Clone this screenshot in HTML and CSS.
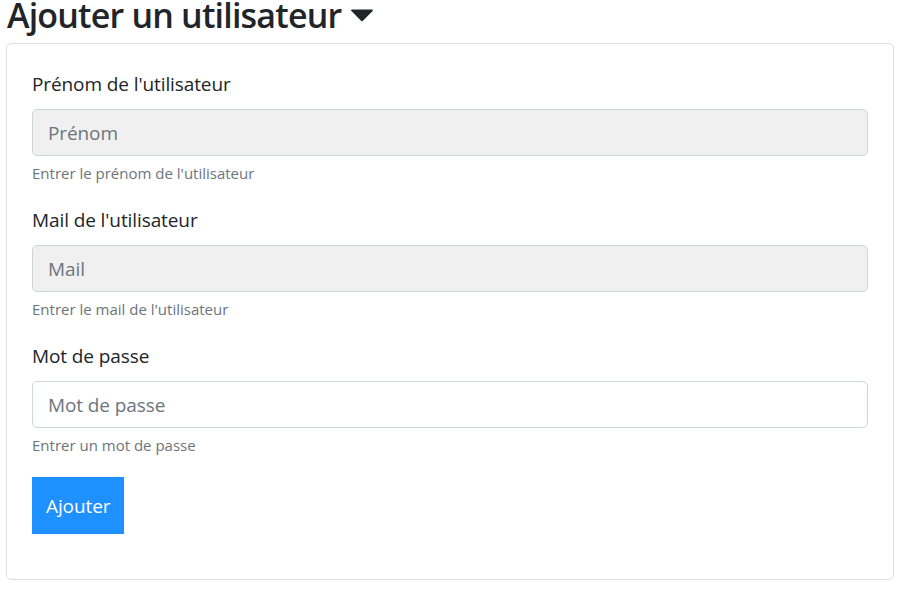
FILE: index.html
```html
<!DOCTYPE html>
<html lang="fr">
<head>
<meta charset="utf-8">
<title>Ajouter un utilisateur</title>
<link rel="stylesheet" href="styles.css">
</head>
<body>
<div class="page">
  <h3 class="title">Ajouter un utilisateur <svg class="caret" viewBox="0 0 24 13" width="24" height="13"><path d="M2 0.5 H22 Q23.8 0.5 22.6 2 L13.2 11.6 Q12 12.8 10.8 11.6 L1.4 2 Q0.2 0.5 2 0.5 Z" fill="#212529"/></svg></h3>
  <div class="card">
    <form class="card-body">
      <div class="form-group">
        <label class="label">Prénom de l'utilisateur</label>
        <input class="control" type="text" placeholder="Prénom" disabled>
        <small class="help">Entrer le prénom de l'utilisateur</small>
      </div>
      <div class="form-group">
        <label class="label">Mail de l'utilisateur</label>
        <input class="control" type="text" placeholder="Mail" disabled>
        <small class="help">Entrer le mail de l'utilisateur</small>
      </div>
      <div class="form-group">
        <label class="label">Mot de passe</label>
        <input class="control" type="password" placeholder="Mot de passe">
        <small class="help">Entrer un mot de passe</small>
      </div>
      <div class="form-group">
        <button class="btn" type="button">Ajouter</button>
      </div>
    </form>
  </div>
</div>
</body>
</html>
```
FILE: styles.css
```css
html, body {
  margin: 0;
  padding: 0;
  background: #fff;
}
body {
  font-family: "Open Sans", "Noto Sans", sans-serif;
  color: #212529;
  font-size: 20px;
  line-height: 1.5;
}
.page {
  padding: 0 11px 0 6px;
}
.title {
  margin: 0 0 15px 1px;
  padding-top: 2px;
  font-size: 34px;
  font-weight: 600;
  line-height: 26px;
  letter-spacing: -0.8px;
  display: flex;
  align-items: center;
  gap: 9px;
}
.caret {
  display: block;
  margin-top: 1px;
}
.card {
  border: 1px solid #dfdfdf;
  border-radius: 5px;
}
.card-body {
  padding: 25px 25px 5px 25px;
  margin: 0 0 20px;
}
.form-group {
  margin-bottom: 20px;
}
.label {
  display: block;
  margin-bottom: 10px;
  font-size: 19px;
  line-height: 30px;
  letter-spacing: -0.1px;
}
.control {
  display: block;
  box-sizing: border-box;
  width: 100%;
  height: 47px;
  padding: 7px 15px;
  font-family: inherit;
  font-size: 19px;
  color: #495057;
  background: #fff;
  border: 1px solid #ced4da;
  border-radius: 5px;
  letter-spacing: -0.1px;
}
.control::placeholder {
  color: #6c757d;
  opacity: 1;
}
.control:disabled {
  background: #f0f0f0;
}
.help {
  display: block;
  margin-top: 5px;
  font-size: 15px;
  line-height: 24px;
  color: #6c757d;
  letter-spacing: 0;
}
.btn {
  display: block;
  height: 57px;
  padding: 0 14px;
  border: 0;
  border-radius: 0;
  background: #1e90ff;
  color: #fff;
  font-family: inherit;
  font-size: 19px;
  letter-spacing: -0.1px;
}
```
